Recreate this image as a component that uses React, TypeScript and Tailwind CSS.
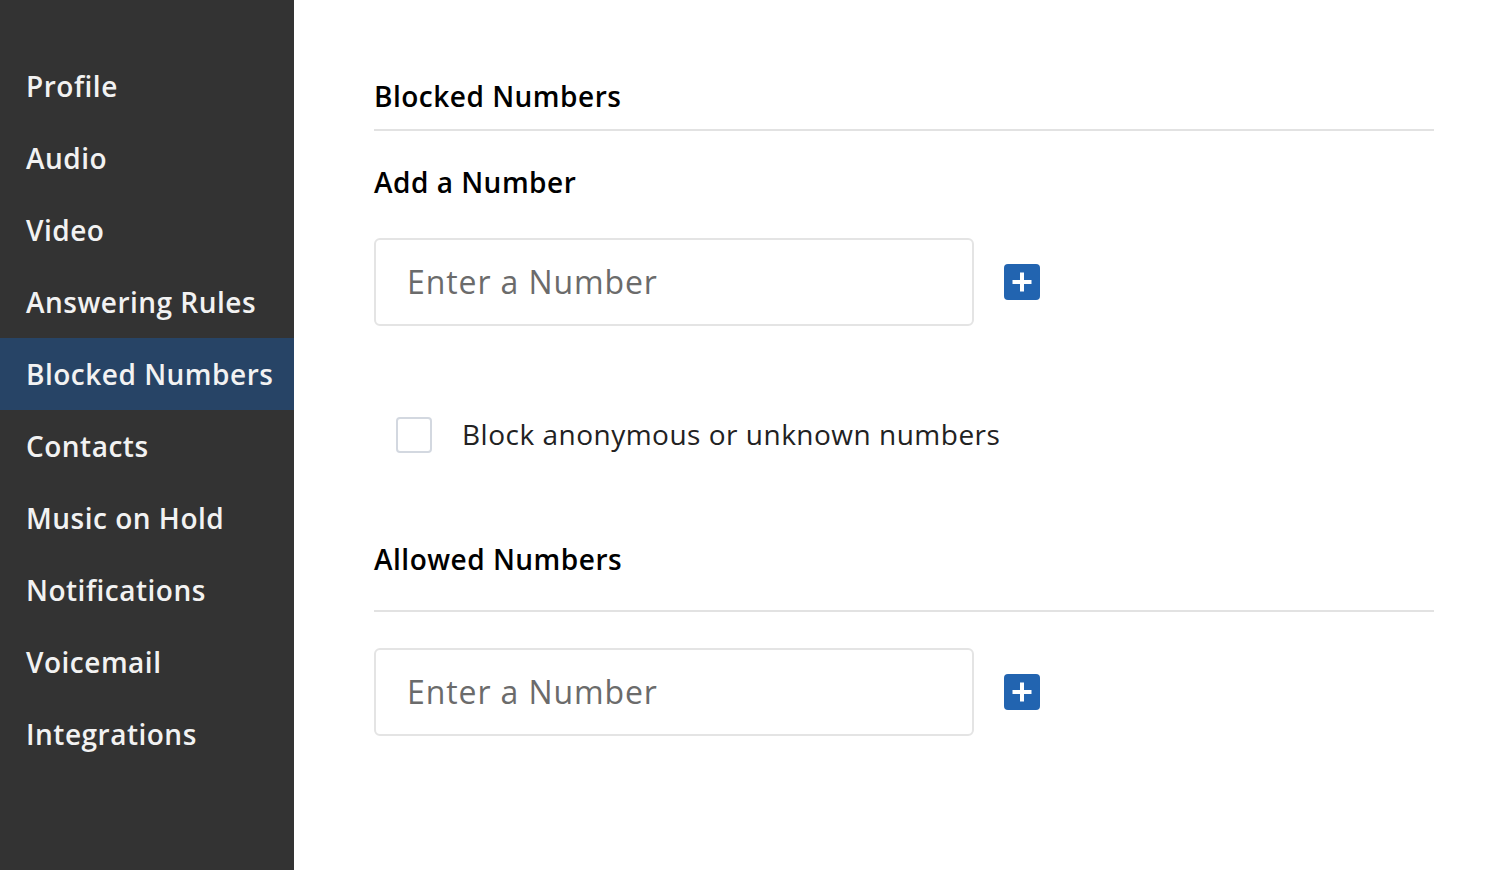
import React, { useState } from 'react';

const navItems = [
    'Profile',
    'Audio',
    'Video',
    'Answering Rules',
    'Blocked Numbers',
    'Contacts',
    'Music on Hold',
    'Notifications',
    'Voicemail',
    'Integrations',
];

const PlusButton: React.FC = () => (
    <button
        type="button"
        className="ml-[30px] flex h-9 w-9 items-center justify-center rounded-[4px] bg-[#2264b0]"
    >
        <svg width="20" height="20" viewBox="0 0 20 20">
            <rect x="8" y="0.5" width="4" height="19" fill="#fff" />
            <rect x="0.5" y="8" width="19" height="4" fill="#fff" />
        </svg>
    </button>
);

const NumberInput: React.FC<{ value: string; onChange: (v: string) => void }> = ({ value, onChange }) => (
    <div className="flex items-center">
        <input
            type="text"
            placeholder="Enter a Number"
            value={value}
            onChange={(e) => onChange(e.target.value)}
            className="h-[88px] w-[600px] rounded-[6px] border-2 border-[#e4e4e4] bg-white px-[31px] pb-[2px] text-[32px] tracking-[0.9px] text-[#333] placeholder-[#6b6b6b] outline-none"
        />
        <PlusButton />
    </div>
);

export default function App() {
    const [active, setActive] = useState('Blocked Numbers');
    const [blocked, setBlocked] = useState('');
    const [allowed, setAllowed] = useState('');
    const [anon, setAnon] = useState(false);

    return (
        <div
            className="flex h-[870px] w-full bg-white tracking-[0.5px]"
            style={{ fontFamily: '"Open Sans", "Noto Sans", sans-serif' }}
        >
            <nav className="flex w-[294px] shrink-0 flex-col bg-[#333333] pt-[50px]">
                {navItems.map((item) => (
                    <button
                        key={item}
                        onClick={() => setActive(item)}
                        className={`flex h-[72px] items-center whitespace-nowrap pl-[26px] text-left text-[28px] font-semibold text-[#f2f2f2] ${
                            active === item ? 'bg-[#274466]' : ''
                        }`}
                    >
                        {item}
                    </button>
                ))}
            </nav>

            <main className="flex flex-1 flex-col pl-[80px] pr-[70px] pt-[78px]">
                <h2 className="pb-[15px] text-[28px] font-semibold leading-[36px] text-black">Blocked Numbers</h2>
                <div className="h-[2px] bg-[#e2e2e2]" />

                <h3 className="mt-[33px] text-[28px] font-semibold leading-[36px] text-black">Add a Number</h3>
                <div className="mt-[38px]">
                    <NumberInput value={blocked} onChange={setBlocked} />
                </div>

                <label className="ml-[22px] mt-[90px] flex cursor-pointer items-center">
                    <input
                        type="checkbox"
                        checked={anon}
                        onChange={(e) => setAnon(e.target.checked)}
                        className="h-9 w-9 appearance-none rounded-[4px] border-2 border-[#d3d8e0] bg-white checked:bg-[#2264b0]"
                    />
                    <span className="ml-[30px] pb-[2px] text-[28px] leading-[36px] text-[#222]">
                        Block anonymous or unknown numbers
                    </span>
                </label>

                <h2 className="mt-[87px] pb-[33px] text-[28px] font-semibold leading-[36px] text-black">Allowed Numbers</h2>
                <div className="h-[2px] bg-[#e2e2e2]" />
                <div className="mt-[36px]">
                    <NumberInput value={allowed} onChange={setAllowed} />
                </div>
            </main>
        </div>
    );
}
